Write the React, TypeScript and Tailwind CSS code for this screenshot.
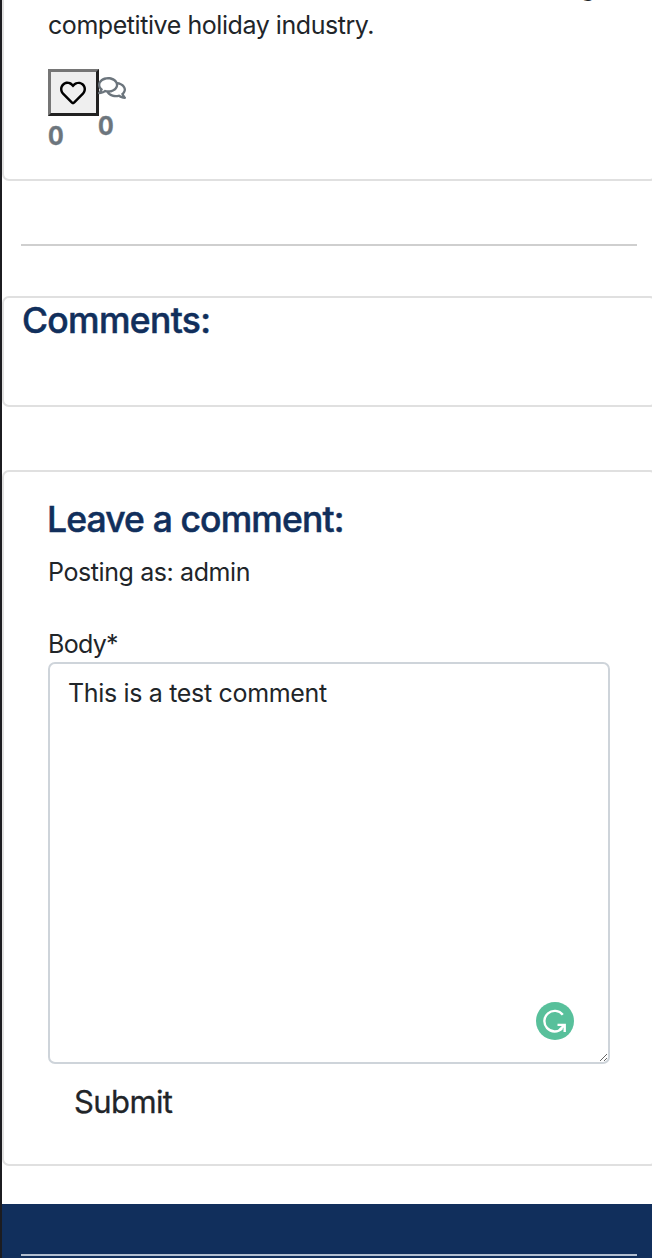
import { FaRegComments, FaRegHeart } from "react-icons/fa";

function Reactions() {
  return (
    <div className="mt-[24px] flex items-start text-[25px] font-bold leading-[38px] text-[#6c757d]">
      <div className="w-[50px]">
        <button className="flex h-[47px] w-[51px] items-center justify-center border-[3px] border-t-[#767676] border-r-[#212121] border-b-[#212121] border-l-[#767676] bg-[#efefef] pr-px text-black">
          <FaRegHeart className="size-[26px]" />
        </button>
        <div className="mt-px origin-left scale-x-[0.93] [-webkit-text-stroke:0.4px]">0</div>
      </div>
      <div className="pt-1">
        <FaRegComments className="mt-px size-[28px]" />
        <div className="mt-[5px] origin-left scale-x-[0.93] [-webkit-text-stroke:0.4px]">0</div>
      </div>
    </div>
  );
}

function AssistantBadge() {
  return (
    <svg className="absolute top-[340px] left-[488px] size-[38px]" viewBox="0 0 38 38" fill="none">
      <circle cx="19" cy="19" r="19" fill="#58c09b" />
      <path d="M26.8 12.8A10.3 10.3 0 1 0 26 26.4" stroke="#fff" strokeWidth="2.4" />
      <path d="M21.5 22.9h7.2v7.2" stroke="#fff" strokeWidth="2.4" />
      <path d="M23.8 27.8l4.6-4.6" stroke="#fff" strokeWidth="2.4" />
    </svg>
  );
}

export default function App() {
  return (
    <div className="h-[1258px] overflow-hidden border-l-2 border-[#1c1c20] bg-white font-['Inter','Liberation_Sans',sans-serif] text-[#212529]">
      <article className="h-[181px] w-[655px] overflow-hidden rounded-b-[7px] border-2 border-t-0 border-[#e0e0e0] pl-11">
        <p className="-mt-[31px] h-[76px] text-[25px] leading-[37.5px] tracking-[-0.44px]">
          <span className="block h-[38px] pl-[532px]">g</span>
          competitive holiday industry.
        </p>
        <Reactions />
      </article>

      <hr className="mt-[63px] mr-[15px] ml-[19px] border-t-2 border-[#cfcfcf]" />

      <section className="mt-[50px] h-[111px] w-[655px] rounded-[7px] border-2 border-[#e0e0e0] pl-[18px]">
        <h3 className="text-[35.5px] font-medium leading-[45px] tracking-[-0.68px] text-[#112f5c] [-webkit-text-stroke:0.5px]">
          Comments:
        </h3>
      </section>

      <section className="mt-[63px] h-[696px] w-[655px] rounded-[7px] border-2 border-[#e0e0e0] pt-[25px] pl-11">
        <h3 className="-ml-px text-[35.5px] font-medium leading-[45px] tracking-[-0.88px] text-[#112f5c] [-webkit-text-stroke:0.5px]">
          Leave a comment:
        </h3>
        <p className="mt-[11px] text-[25px] leading-[38px] tracking-[-0.4px]">Posting as: admin</p>
        <label
          className="mt-[34px] block text-[25px] leading-[38px] tracking-[-0.7px]"
          htmlFor="body"
        >
          Body*
        </label>
        <div className="relative -mt-px h-[402px] w-[562px]">
          <textarea
            id="body"
            className="block h-[402px] w-[562px] rounded-[7px] border-2 border-[#ced4da] px-[18px] py-[10px] text-[25px] leading-[38px] tracking-[-0.33px]"
            defaultValue="This is a test comment"
          />
          <AssistantBadge />
        </div>
        <button className="mt-[14px] ml-[26px] block text-[31px] leading-[48px] tracking-[-0.6px] [-webkit-text-stroke:0.3px]">
          Submit
        </button>
      </section>

      <footer className="mt-[38px] h-[54px] bg-[#112f5c] pt-[50px]">
        <hr className="mr-[15px] ml-[19px] border-t-2 border-[#b3bfd0]" />
      </footer>
    </div>
  );
}
